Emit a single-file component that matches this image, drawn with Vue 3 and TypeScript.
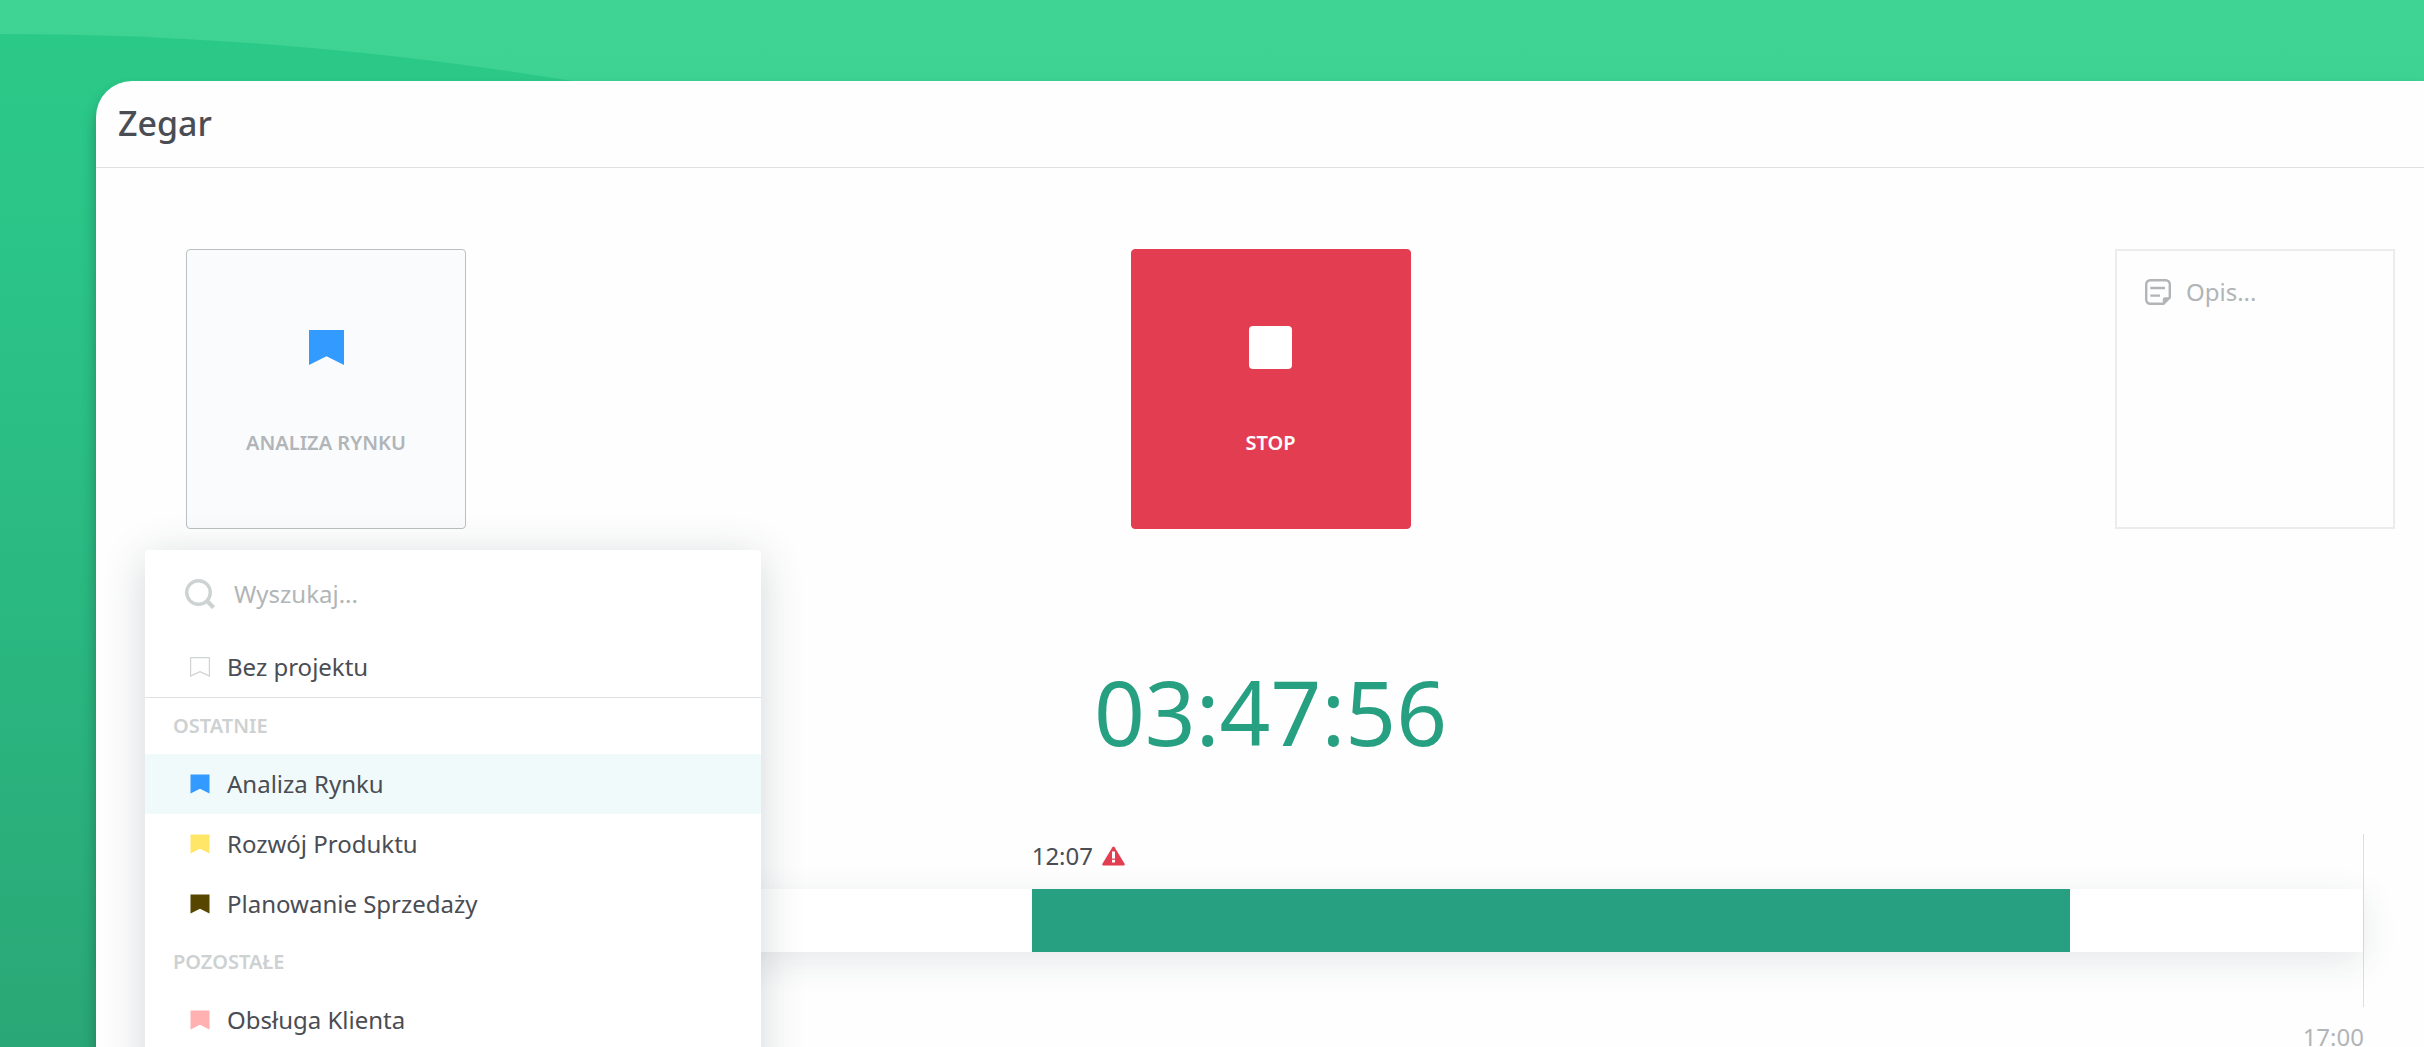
<script setup lang="ts">
import { computed, ref } from 'vue'

interface Project {
  name: string
  color: string
}

interface ProjectGroup {
  title: string
  projects: Project[]
}

const groups: ProjectGroup[] = [
  {
    title: 'Ostatnie',
    projects: [
      { name: 'Analiza Rynku', color: '#339bff' },
      { name: 'Rozwój Produktu', color: '#ffe666' },
      { name: 'Planowanie Sprzedaży', color: '#564600' },
    ],
  },
  {
    title: 'Pozostałe',
    projects: [{ name: 'Obsługa Klienta', color: '#ffb0b0' }],
  },
]

const selected = ref<Project>(groups[0].projects[0])
const search = ref('')
const description = ref('')

// Times of day in seconds
const dayStart = 9 * 3600
const dayEnd = 17 * 3600
const entryStart = 12 * 3600 + 7 * 60 + 40
const elapsed = 3 * 3600 + 47 * 60 + 56

const pad = (n: number): string => String(n).padStart(2, '0')
const hoursMinutes = (s: number): string =>
  `${pad(Math.floor(s / 3600))}:${pad(Math.floor((s % 3600) / 60))}`
const percent = (s: number): string => `${(s / (dayEnd - dayStart)) * 100}%`

const clock = computed(() => `${hoursMinutes(elapsed)}:${pad(elapsed % 60)}`)
const offset = computed(() => percent(entryStart - dayStart))
const length = computed(() => percent(elapsed))
</script>

<template>
  <div class="page">
    <div class="wave"></div>
    <main class="panel">
      <header class="panel-header">
        <h1>Zegar</h1>
      </header>

      <div class="content">
        <div class="controls">
          <div class="picker">
            <button type="button" class="tile tile-project" aria-haspopup="true" aria-expanded="true">
              <span class="tile-icon">
                <svg class="flag-large" viewBox="0 0 20 20" aria-hidden="true">
                  <path d="M0 0H20V20L10 15L0 20Z" :fill="selected.color" />
                </svg>
              </span>
              <span class="tile-label">{{ selected.name }}</span>
            </button>

            <div class="dropdown">
              <label class="search">
                <svg class="search-icon" viewBox="0 0 30 30" fill="none" aria-hidden="true">
                  <circle cx="13.5" cy="13.5" r="11.8" stroke="#cdd2d2" stroke-width="3.4" />
                  <path d="M21.5 21.5L28.6 28.6" stroke="#cdd2d2" stroke-width="4.2" />
                </svg>
                <input v-model="search" type="text" placeholder="Wyszukaj..." aria-label="Wyszukaj projekt" />
              </label>
              <button type="button" class="option">
                <svg class="flag" viewBox="0 0 20 20" fill="none" aria-hidden="true">
                  <path d="M.6.6H19.4V19L10 14.6L.6 19Z" stroke="#d0d3d4" stroke-width="1.2" />
                </svg>
                Bez projektu
              </button>
              <section v-for="(group, i) in groups" :key="group.title" :class="['group', { first: i === 0 }]">
                <h2>{{ group.title }}</h2>
                <button
                  v-for="project in group.projects"
                  :key="project.name"
                  type="button"
                  :class="['option', { active: project.name === selected.name }]"
                  @click="selected = project"
                >
                  <svg class="flag" viewBox="0 0 20 20" aria-hidden="true">
                    <path d="M.5.5H19.5V19.5L10 14.8L.5 19.5Z" :fill="project.color" />
                  </svg>
                  {{ project.name }}
                </button>
              </section>
            </div>
          </div>

          <button type="button" class="tile tile-stop">
            <span class="tile-icon"><span class="stop-square"></span></span>
            <span class="tile-label">Stop</span>
          </button>

          <label class="note">
            <svg class="note-icon" viewBox="0 0 26 26" fill="none" aria-hidden="true">
              <path
                d="M18.5 24.8H5.2A4 4 0 0 1 1.2 20.8V5.2A4 4 0 0 1 5.2 1.2H20.8A4 4 0 0 1 24.8 5.2V18.5Z"
                stroke="#b1b5b7"
                stroke-width="2.4"
              />
              <path d="M5.3 9H20M5.3 16.6H15" stroke="#b1b5b7" stroke-width="2.4" />
              <path d="M17.8 25.5V20.3Q17.8 18.2 20 18.2H25.5Z" fill="#b1b5b7" />
            </svg>
            <textarea v-model="description" placeholder="Opis..." aria-label="Opis"></textarea>
          </label>
        </div>

        <time class="clock">{{ clock }}</time>

        <div class="timeline">
          <div class="start" :style="{ marginLeft: offset }">
            {{ hoursMinutes(entryStart) }}
            <svg class="warning" viewBox="0 0 23 20" aria-hidden="true">
              <path
                d="M10.4 1.2Q11.5-.4 12.6 1.2L22.6 17.8Q23.2 19.4 21.6 19.4H1.4Q-.2 19.4.4 17.8Z"
                fill="#e33d52"
              />
              <path d="M11.5 5.6V12.4M11.5 13.8V16.6" stroke="#fff" stroke-width="3" />
            </svg>
          </div>
          <div class="track">
            <div class="entry" :style="{ marginLeft: offset, width: length }"></div>
          </div>
        </div>
        <div class="end">{{ hoursMinutes(dayEnd) }}</div>
      </div>
    </main>
  </div>
</template>

<style>
body {
  margin: 0;
}
</style>

<style scoped>
.page {
  position: relative;
  box-sizing: border-box;
  display: flex;
  height: 100vh;
  padding: 81px 0 0 96px;
  overflow: hidden;
  background: linear-gradient(#40d494, #3cd092 120px);
  color: #4a4d53;
  font-family: 'Noto Sans', sans-serif;
  font-size: 24px;
  line-height: 32px;
}

.page *,
.page *::before {
  box-sizing: border-box;
}

.wave {
  position: absolute;
  inset: 0;
  background: linear-gradient(#2bca88, #2bc488 25%, #2ab37e 70%, #2aa776);
  clip-path: path('M0 34Q567 34 1134 218V4000H0Z');
}

button,
input,
textarea {
  margin: 0;
  padding: 0;
  border: 0;
  background: none;
  color: inherit;
  font: inherit;
  outline: 0;
}

button {
  cursor: pointer;
}

svg {
  display: block;
  flex: none;
}

.panel {
  position: relative;
  flex: 1;
  min-width: 0;
  height: max-content;
  min-height: 100%;
  border-top-left-radius: 36px;
  background: #fefefe;
  box-shadow: 0 10px 14px rgba(20, 50, 40, 0.4);
}

.panel-header {
  padding: 22px 22px 24px;
  border-bottom: 1px solid #dfe1e3;
}

h1 {
  margin: 0;
  font-size: 34px;
  font-weight: 500;
  line-height: 40px;
}

.content {
  display: flex;
  flex-direction: column;
  padding: 81px 60px 40px 81px;
}

.controls {
  display: grid;
  grid-template-columns: 1fr auto 1fr;
}

.picker {
  position: relative;
  z-index: 1;
  width: 280px;
  margin-left: 9px;
}

.tile {
  display: flex;
  flex-direction: column;
  align-items: center;
  gap: 60px;
  width: 280px;
  height: 280px;
  padding-top: 76px;
  border: 1px solid transparent;
  border-radius: 4px;
  font-size: 20px;
  font-weight: 600;
  line-height: 28px;
  text-transform: uppercase;
}

.tile-project {
  border-color: #bbc0c1;
  background: #fafbfd;
  color: #b1b5b7;
}

.tile-stop {
  border-color: #e33d52;
  background: #e33d52;
  color: #fff;
}

.tile-icon {
  display: flex;
  align-items: center;
  height: 43px;
}

.flag-large {
  width: 35px;
  height: 35px;
}

.stop-square {
  width: 43px;
  height: 43px;
  border-radius: 4px;
  background: #fff;
}

.dropdown {
  position: absolute;
  top: 301px;
  left: -41px;
  width: 616px;
  padding-bottom: 60px;
  border-radius: 4px;
  background: #fff;
  box-shadow: 0 8px 44px rgba(40, 55, 65, 0.2);
}

.search {
  display: flex;
  align-items: center;
  gap: 19px;
  height: 87px;
  padding: 0 40px;
}

.search-icon {
  width: 30px;
  height: 30px;
}

.search input {
  flex: 1;
  min-width: 0;
}

input::placeholder,
textarea::placeholder {
  color: #b1b5b7;
  opacity: 1;
}

.option {
  display: flex;
  align-items: center;
  gap: 17px;
  width: 100%;
  height: 60px;
  padding: 0 45px;
  text-align: left;
}

.option.active {
  background: #f1fafa;
}

.flag {
  width: 20px;
  height: 20px;
}

.group.first {
  border-top: 1px solid #dfe2e4;
}

h2 {
  margin: 0;
  padding: 14px 28px;
  color: #cdd1d2;
  font-size: 20px;
  font-weight: 600;
  line-height: 28px;
  text-transform: uppercase;
}

.note {
  display: flex;
  gap: 15px;
  justify-self: end;
  width: 280px;
  height: 280px;
  margin-right: -31px;
  padding: 25px 28px;
  border: 2px solid #ebeced;
}

.note-icon {
  width: 26px;
  height: 26px;
  margin-top: 3px;
}

.note textarea {
  flex: 1;
  min-width: 0;
  resize: none;
}

.clock {
  margin-top: 138px;
  color: #27a082;
  font-size: 89px;
  line-height: 90px;
  text-align: center;
}

.timeline {
  margin-top: 77px;
  padding: 6px 0 55px;
  border-right: 1px solid #dcdfe1;
}

.start {
  display: flex;
  align-items: center;
  gap: 9px;
}

.warning {
  width: 23px;
  height: 20px;
}

.track {
  height: 63px;
  margin-top: 17px;
  background: #fff;
  box-shadow: 0 10px 36px rgba(40, 60, 75, 0.11);
}

.entry {
  height: 100%;
  background: #27a082;
}

.end {
  margin-top: 14px;
  color: #b1b5b7;
  text-align: right;
}
</style>
